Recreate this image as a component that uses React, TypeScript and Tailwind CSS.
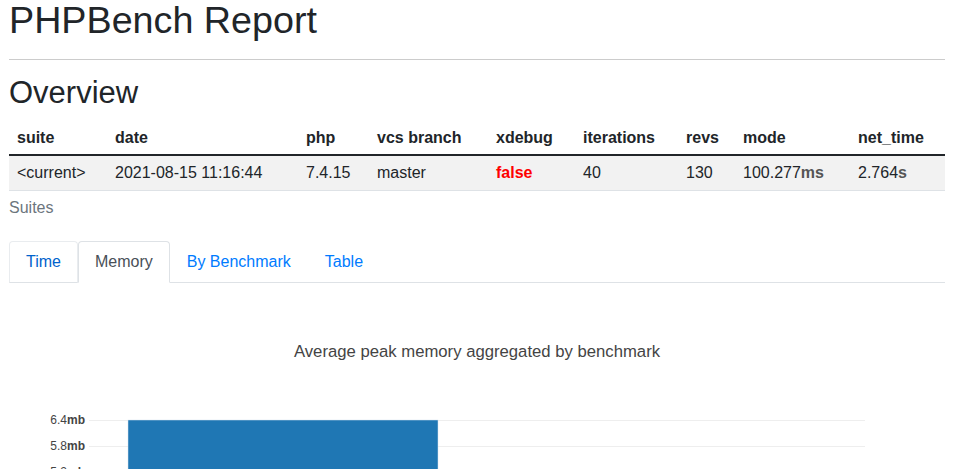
import React from "react";

const font = { fontFamily: '"Liberation Sans", Arial, sans-serif' };

type Col = { key: string; label: string; width: string };

const cols: Col[] = [
  { key: "suite", label: "suite", width: "w-[98px]" },
  { key: "date", label: "date", width: "w-[191px]" },
  { key: "php", label: "php", width: "w-[71px]" },
  { key: "vcs", label: "vcs branch", width: "w-[119px]" },
  { key: "xdebug", label: "xdebug", width: "w-[87px]" },
  { key: "iterations", label: "iterations", width: "w-[103px]" },
  { key: "revs", label: "revs", width: "w-[57px]" },
  { key: "mode", label: "mode", width: "w-[115px]" },
  { key: "net", label: "net_time", width: "w-[95px]" },
];

function Unit({ value, unit }: { value: string; unit: string }) {
  return (
    <>
      {value}
      <span className="font-bold text-[#555]">{unit}</span>
    </>
  );
}

function OverviewTable() {
  return (
    <table className="w-full border-collapse text-[16px] leading-6 text-[#212529] table-fixed">
      <thead>
        <tr className="border-b-2 border-[#212529]">
          {cols.map((c) => (
            <th key={c.key} className={`${c.width} px-2 pt-[6px] pb-[4px] text-left font-bold`}>
              {c.label}
            </th>
          ))}
        </tr>
      </thead>
      <tbody>
        <tr className="bg-[#f2f2f2] border-b border-[#dee2e6]">
          <td className="px-2 py-[5px]">&lt;current&gt;</td>
          <td className="px-2 py-[5px]">2021-08-15 11:16:44</td>
          <td className="px-2 py-[5px]">7.4.15</td>
          <td className="px-2 py-[5px]">master</td>
          <td className="px-2 py-[5px] font-bold text-[#ff0000]">false</td>
          <td className="px-2 py-[5px]">40</td>
          <td className="px-2 py-[5px]">130</td>
          <td className="px-2 py-[5px]">
            <Unit value="100.277" unit="ms" />
          </td>
          <td className="px-2 py-[5px]">
            <Unit value="2.764" unit="s" />
          </td>
        </tr>
      </tbody>
    </table>
  );
}

function Tabs() {
  const tabs = ["Time", "Memory", "By Benchmark", "Table"];
  return (
    <ul className="flex border-b border-[#dee2e6] text-[16px] leading-6">
      {tabs.map((t) => {
        if (t === "Memory") {
          return (
            <li key={t} className="-mb-px">
              <span className="block px-4 py-2 border border-[#dee2e6] border-b-white rounded-t bg-white text-[#495057]">
                {t}
              </span>
            </li>
          );
        }
        if (t === "Time") {
          return (
            <li key={t} className="-mb-px">
              <span className="block px-4 py-2 border border-[#e9ecef] border-b-[#dee2e6] rounded-t text-[#0062cc]">
                {t}
              </span>
            </li>
          );
        }
        return (
          <li key={t} className="-mb-px">
            <span className="block px-4 py-2 border border-transparent text-[#007bff]">{t}</span>
          </li>
        );
      })}
    </ul>
  );
}

function MemoryChart() {
  const ticks = ["6.4", "5.8", "5.2", "4.6", "4.0"];
  return (
    <div>
      <p className="mt-[57px] text-center text-[16.7px] leading-6 text-[#444]">
        Average peak memory aggregated by benchmark
      </p>
      <svg width="936" height="200" className="mt-[16px] block">
        {ticks.map((t, i) => (
          <g key={t}>
            <line x1="80" x2="856" y1={40.5 + i * 26} y2={40.5 + i * 26} stroke="#eeeeee" strokeWidth="1" />
            <text
              x="76"
              y={44 + i * 26}
              textAnchor="end"
              fontSize="12"
              fill="#444"
              style={font}
            >
              {t}
              <tspan fontWeight="bold">mb</tspan>
            </text>
          </g>
        ))}
        <rect x="119" y="40" width="310" height="160" fill="#1f77b4" stroke="#d6e4f0" strokeWidth="0.5" />
      </svg>
    </div>
  );
}

export default function App() {
  return (
    <div className="bg-white min-h-screen" style={font}>
      <div className="ml-[9px] w-[936px] text-[#212529]">
        <h1 className="text-[37.7px] leading-[40px] font-normal">PHPBench Report</h1>
        <hr className="mt-[19px] border-t border-[#cccccc]" />
        <h2 className="mt-[15px] text-[31px] leading-[36px] font-normal">Overview</h2>
        <div className="mt-[9px]">
          <OverviewTable />
          <p className="pt-[5px] text-[16px] leading-6 text-[#6c757d]">Suites</p>
        </div>
        <div className="mt-[21px]">
          <Tabs />
          <MemoryChart />
        </div>
      </div>
    </div>
  );
}
